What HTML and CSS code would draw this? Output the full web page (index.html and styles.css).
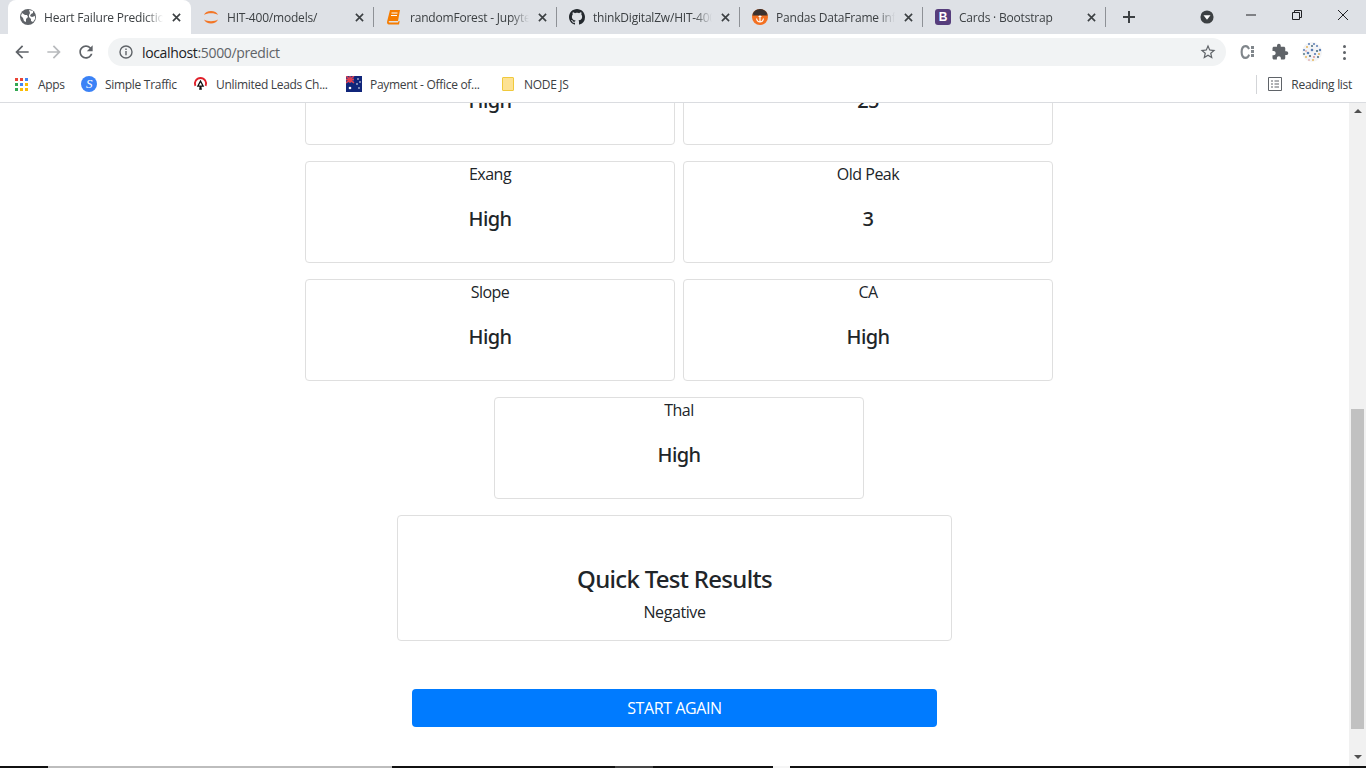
FILE: index.html
```html
<!DOCTYPE html>
<html lang="en">
<head>
    <meta charset="UTF-8">
    <title>Heart Failure Prediction</title>
    <link rel="stylesheet" href="styles.css">
</head>
<body>
    <div class="tabstrip">
        <div class="tab active">
            <svg class="favicon" viewBox="0 0 16 16"><circle cx="8" cy="8" r="8" fill="#5f6368"/><path d="M2 4l3 2 2 0 1 2-2 2 0 3-2-1-1-3-2-2zM9 1l4 1 0 2-2 1-1 2 2 1 3-1 0 3-2 3-2-1 0-2-2-2 0-2 1-2z" fill="#fff"/></svg>
            <span class="tab-title">Heart Failure Prediction</span>
            <span class="tab-close"><svg viewBox="0 0 10 10"><path d="M1 1l8 8M9 1l-8 8" /></svg></span>
        </div>
        <div class="tab">
            <svg class="favicon" viewBox="0 0 16 16"><path d="M1 6C2.500 .5 13.500 .5 15 6 12 3.500 4 3.500 1 6zM1 10.500C3 15.800 13 15.800 15 10.500 12 12.800 4 12.800 1 10.500z" fill="#f37626"/></svg>
            <span class="tab-title">HIT-400/models/</span>
            <span class="tab-close"><svg viewBox="0 0 10 10"><path d="M1 1l8 8M9 1l-8 8" /></svg></span>
        </div>
        <div class="tab">
            <svg class="favicon" viewBox="0 0 16 16"><path d="M4 1h10l-2 11H3.500C2.500 12 2.300 13.500 3.500 13.500H12l.2-1 1.500-.5-.7 3.500H3C1.300 15.500.800 14 1.100 12.500z" fill="#f57c00"/><path d="M5.500 4h6M5 6.500h6" stroke="#fff" stroke-width="1"/></svg>
            <span class="tab-title">randomForest - Jupyter Notebook</span>
            <span class="tab-close"><svg viewBox="0 0 10 10"><path d="M1 1l8 8M9 1l-8 8" /></svg></span>
        </div>
        <div class="tab">
            <svg class="favicon" viewBox="0 0 16 16"><path fill="#24292e" d="M8 0C3.580 0 0 3.580 0 8c0 3.540 2.290 6.530 5.470 7.590.4.070.55-.17.55-.38 0-.19-.01-.82-.01-1.490-2.010.37-2.530-.49-2.690-.94-.09-.23-.48-.94-.82-1.130-.28-.15-.68-.52-.01-.53.63-.01 1.080.58 1.230.82.72 1.210 1.870.87 2.330.66.07-.52.28-.87.51-1.070-1.780-.2-3.640-.89-3.640-3.950 0-.87.31-1.590.82-2.150-.08-.2-.36-1.020.08-2.120 0 0 .67-.21 2.200.82.64-.18 1.320-.27 2-.27.68 0 1.360.09 2 .27 1.530-1.040 2.200-.82 2.200-.82.44 1.100.16 1.920.08 2.120.51.56.82 1.270.82 2.150 0 3.070-1.870 3.750-3.650 3.950.29.25.54.73.54 1.480 0 1.070-.01 1.930-.01 2.200 0 .21.15.46.55.38A8.013 8.013 0 0016 8c0-4.420-3.580-8-8-8z"/></svg>
            <span class="tab-title">thinkDigitalZw/HIT-400</span>
            <span class="tab-close"><svg viewBox="0 0 10 10"><path d="M1 1l8 8M9 1l-8 8" /></svg></span>
        </div>
        <div class="tab">
            <svg class="favicon" viewBox="0 0 16 16"><circle cx="8" cy="8" r="8" fill="#f37021"/><path d="M.4 5.500A8 8 0 0 1 15.600 5.500z" fill="#3b3230"/><path d="M0 6.200L8 1.500l8 4.700-1 .3H1z" fill="#3b3230"/><path d="M8 6.500v6.500M4.500 9.500c.5 2.500 2.300 3.500 3.500 3.500s3-1 3.500-3.500M6.500 7.500h3" stroke="#fff" stroke-width="1.200" fill="none"/></svg>
            <span class="tab-title">Pandas DataFrame info()</span>
            <span class="tab-close"><svg viewBox="0 0 10 10"><path d="M1 1l8 8M9 1l-8 8" /></svg></span>
        </div>
        <div class="tab">
            <span class="favicon bootstrap-icon">B</span>
            <span class="tab-title">Cards · Bootstrap</span>
            <span class="tab-close"><svg viewBox="0 0 10 10"><path d="M1 1l8 8M9 1l-8 8" /></svg></span>
        </div>
        <svg class="new-tab" viewBox="0 0 12 12"><path d="M6 0v12M0 6h12"/></svg>
        <div class="tab-search"><svg viewBox="0 0 16 16"><circle cx="8" cy="8" r="7.500" fill="#3c4043"/><path d="M4 6h8L8 11z" fill="#fff"/></svg></div>
        <div class="window-controls">
            <svg viewBox="0 0 12 12"><path d="M1 6h10"/></svg>
            <svg viewBox="0 0 12 12"><path d="M1.500 3.500h7v7h-7zM3.500 3.500v-2h7v7h-2"/></svg>
            <svg viewBox="0 0 12 12"><path d="M1 1l10 10M11 1L1 11"/></svg>
        </div>
    </div>

    <div class="toolbar">
        <svg class="tool" viewBox="0 0 24 24"><path d="M20 11H7.830l5.590-5.590L12 4l-8 8 8 8 1.410-1.410L7.830 13H20v-2z"/></svg>
        <svg class="tool disabled" viewBox="0 0 24 24"><path d="M4 11h12.170l-5.590-5.590L12 4l8 8-8 8-1.410-1.410L16.170 13H4v-2z"/></svg>
        <svg class="tool" viewBox="0 0 24 24"><path d="M17.650 6.350C16.200 4.900 14.210 4 12 4c-4.420 0-7.990 3.580-7.990 8s3.570 8 7.990 8c3.730 0 6.840-2.550 7.730-6h-2.080c-.82 2.330-3.040 4-5.650 4-3.310 0-6-2.690-6-6s2.690-6 6-6c1.660 0 3.140.69 4.220 1.780L13 11h7V4l-2.350 2.350z"/></svg>
        <div class="omnibox">
            <svg class="info" viewBox="0 0 14 14"><circle cx="7" cy="7" r="6" fill="none" stroke="#5f6368" stroke-width="1.400"/><path d="M6.300 6h1.400v4.200H6.300zM6.300 3.600h1.400V5H6.300z" fill="#5f6368"/></svg>
            <span class="url"><b>localhost</b>:5000/predict</span>
            <svg class="star" viewBox="0 0 24 24"><path d="M22 9.240l-7.190-.62L12 2 9.190 8.630 2 9.240l5.460 4.730L5.820 21 12 17.270 18.180 21l-1.630-7.030L22 9.240zM12 15.400l-3.760 2.270 1-4.280-3.320-2.880 4.380-.38L12 6.100l1.710 4.040 4.380.38-3.320 2.880 1 4.280L12 15.400z"/></svg>
        </div>
        <div class="extensions">
            <span class="ext-c"><span>C</span><i></i></span>
            <svg class="ext" viewBox="0 0 24 24"><path d="M20.500 11H19V7c0-1.100-.9-2-2-2h-4V3.500C13 2.120 11.880 1 10.500 1S8 2.120 8 3.500V5H4c-1.100 0-1.990.9-1.990 2v3.800H3.500c1.490 0 2.700 1.210 2.700 2.700s-1.210 2.700-2.700 2.700H2V20c0 1.100.9 2 2 2h3.800v-1.500c0-1.490 1.210-2.700 2.700-2.700 1.490 0 2.700 1.210 2.700 2.700V22H17c1.100 0 2-.9 2-2v-4h1.500c1.380 0 2.500-1.120 2.500-2.500S21.880 11 20.500 11z"/></svg>
            <svg class="avatar" viewBox="0 0 20 20">
                <circle cx="10" cy="10" r="10" fill="#f3f4f6"/>
                <g fill="#5b7fb5"><circle cx="7" cy="2" r="1"/><circle cx="12" cy="2" r="1"/><circle cx="2" cy="8" r="1"/><circle cx="18" cy="8" r="1.200"/><circle cx="10" cy="8" r="1.300"/><circle cx="6" cy="11" r="1.300"/><circle cx="13" cy="12" r="1.100"/><circle cx="15" cy="4" r="1"/></g>
                <g fill="#e8b04a"><circle cx="5" cy="5" r=".9"/><circle cx="17" cy="12" r=".9"/><circle cx="4" cy="15" r=".9"/><circle cx="11" cy="18" r=".9"/></g>
                <g fill="#4a6d7c"><circle cx="10" cy="4" r="1"/><circle cx="15" cy="9" r="1.100"/><circle cx="8" cy="14" r="1.100"/><circle cx="16" cy="15" r="1"/><circle cx="2" cy="12" r=".9"/></g>
                <g fill="#d88a8a"><circle cx="12" cy="15" r=".9"/><circle cx="7" cy="18" r=".8"/><circle cx="4" cy="9" r=".8"/></g>
            </svg>
            <span class="menu-dots"><i></i><i></i><i></i></span>
        </div>
    </div>

    <div class="bookmarks">
        <div class="bookmark">
            <svg class="apps" viewBox="0 0 13 13">
                <path fill="#ea4335" d="M0 0h3v3H0zM5 0h3v3H5z"/><path fill="#4285f4" d="M10 0h3v3h-3zM5 5h3v3H5z"/><path fill="#34a853" d="M0 5h3v3H0zM0 10h3v3H0z"/><path fill="#fbbc05" d="M10 5h3v3h-3zM5 10h3v3H5zM10 10h3v3h-3z"/>
            </svg>
            <span>Apps</span>
        </div>
        <div class="bookmark">
            <span class="traffic-icon">S</span>
            <span>Simple Traffic</span>
        </div>
        <div class="bookmark">
            <svg class="bm-icon leads" viewBox="0 0 16 16"><path d="M2.500 10A6 6 0 1 1 13.500 10" fill="none" stroke="#e0202a" stroke-width="2"/><path d="M8 3.500l4 7.500H9l.5 3h-3l.5-3H4z" fill="#111"/><path d="M8 6.500l1.700 3H6.300z" fill="#fff"/></svg>
            <span>Unlimited Leads Ch...</span>
        </div>
        <div class="bookmark">
            <svg class="bm-icon" viewBox="0 0 16 16"><rect width="16" height="16" fill="#10257a"/><path d="M0 0h8v7H0z" fill="#2a3a8c"/><path d="M0 0l8 7M8 0L0 7M4 0v7M0 3.500h8" stroke="#e04050" stroke-width="1.400"/><g fill="#fff"><circle cx="12" cy="3" r=".8"/><circle cx="14" cy="6" r=".8"/><circle cx="11" cy="8" r=".8"/><circle cx="13" cy="12" r=".8"/><circle cx="4" cy="12" r="1.300"/></g></svg>
            <span>Payment - Office of...</span>
        </div>
        <div class="bookmark">
            <span class="folder"></span>
            <span>NODE JS</span>
        </div>
        <div class="reading-list">
            <svg class="bm-icon" viewBox="0 0 14 14"><path d="M.5.5h13v13H.5zM3 4h2M6.500 4H11M3 7h2M6.500 7H11M3 10h2M6.500 10H11" fill="none" stroke="#5f6368"/></svg>
            <span>Reading list</span>
        </div>
    </div>

    <div class="viewport">
        <main class="page">
            <div class="cards">
                <div class="card"><p class="card-label">Fbs</p><h4 class="card-value">High</h4></div>
                <div class="card"><p class="card-label">Thalach</p><h4 class="card-value">25</h4></div>
                <div class="card"><p class="card-label">Exang</p><h4 class="card-value">High</h4></div>
                <div class="card"><p class="card-label">Old Peak</p><h4 class="card-value">3</h4></div>
                <div class="card"><p class="card-label">Slope</p><h4 class="card-value">High</h4></div>
                <div class="card"><p class="card-label">CA</p><h4 class="card-value">High</h4></div>
                <div class="card"><p class="card-label">Thal</p><h4 class="card-value">High</h4></div>
            </div>
            <div class="result">
                <h3>Quick Test Results</h3>
                <p>Negative</p>
            </div>
            <button class="btn-restart" type="button">START AGAIN</button>
        </main>
        <div class="scrollbar">
            <span class="arrow up"></span>
            <span class="thumb"></span>
            <span class="arrow down"></span>
        </div>
    </div>

    <div class="taskbar-edge">
        <span class="edge-dark edge-a"></span>
        <span class="edge-light edge-b"></span>
        <span class="edge-dark edge-c"></span>
        <span class="edge-mid edge-d"></span>
        <span class="edge-dark edge-e"></span>
        <span class="edge-white edge-f"></span>
        <span class="edge-dark edge-g"></span>
    </div>
</body>
</html>
```

FILE: styles.css
```css
* {
    box-sizing: border-box;
}
html, body {
    height: 768px;
    overflow: hidden;
}
body {
    margin: 0;
    display: flex;
    flex-direction: column;
    font-family: "Open Sans", "Noto Sans", sans-serif;
    background: #fff;
    color: #212529;
}

/* browser chrome */
.tabstrip {
    height: 34px;
    background: #dee1e6;
    display: flex;
    align-items: center;
    padding-left: 8px;
    flex: none;
}
.tab {
    width: 183px;
    height: 34px;
    padding: 0 7px 0 12px;
    display: flex;
    align-items: center;
    position: relative;
    color: #3c4043;
    font-size: 12px;
    letter-spacing: -0.2px;
}
.tab::after {
    content: "";
    position: absolute;
    right: 0;
    top: 7px;
    height: 20px;
    width: 1px;
    background: #8e9196;
}
.tab.active {
    background: #fff;
    border-radius: 8px 8px 0 0;
}
.tab.active::after {
    display: none;
}
.favicon {
    width: 16px;
    height: 16px;
    flex: none;
    margin-right: 8px;
}
.tab-title {
    flex: 1;
    white-space: nowrap;
    overflow: hidden;
    -webkit-mask-image: linear-gradient(to right, #000 85%, transparent);
    mask-image: linear-gradient(to right, #000 85%, transparent);
}
.tab-close {
    width: 16px;
    height: 16px;
    margin-left: 5px;
    display: flex;
    align-items: center;
    justify-content: center;
    flex: none;
}
.tab-close svg {
    width: 9px;
    height: 9px;
    stroke: #3c4043;
    stroke-width: 1.8;
    fill: none;
}
.bootstrap-icon {
    background: #563d7c;
    color: #fff;
    border-radius: 3px;
    font: bold 12px/16px "Liberation Sans", sans-serif;
    text-align: center;
    letter-spacing: 0;
}
.new-tab {
    width: 12px;
    height: 12px;
    margin-left: 17px;
    stroke: #3c4043;
    stroke-width: 2;
    flex: none;
}
.tab-search {
    margin-left: 65px;
    width: 14px;
    height: 14px;
    display: flex;
}
.window-controls {
    margin-left: 31px;
    display: flex;
    gap: 34px;
    margin-top: -5px;
}
.window-controls svg {
    width: 12px;
    height: 12px;
    fill: none;
    stroke: #202124;
    stroke-width: 1;
}

.toolbar {
    height: 36px;
    display: flex;
    align-items: center;
    padding: 0 0 0 12px;
    flex: none;
    background: #fff;
}
.tool {
    width: 20px;
    height: 20px;
    fill: #5f6368;
    margin-right: 12px;
    flex: none;
}
.tool.disabled {
    fill: #b8babd;
}
.omnibox {
    width: 1118px;
    height: 28px;
    border-radius: 14px;
    background: #f1f3f4;
    display: flex;
    align-items: center;
    padding: 0 9px 0 11px;
    flex: none;
}
.info {
    width: 14px;
    height: 14px;
    flex: none;
}
.url {
    margin-left: 9px;
    font-size: 14px;
    color: #5f6368;
    flex: 1;
    letter-spacing: -0.35px;
}
.url b {
    font-weight: 400;
    color: #202124;
}
.star {
    width: 18px;
    height: 18px;
    fill: #5f6368;
}
.extensions {
    flex: 1;
    display: flex;
    align-items: center;
    padding-left: 14px;
}
.ext-c {
    width: 16px;
    height: 20px;
    position: relative;
    color: #80868b;
    font: bold 20px/20px "Liberation Sans", sans-serif;
}
.ext-c span {
    display: block;
    transform: scaleX(.72);
    transform-origin: left center;
}
.ext-c i {
    position: absolute;
    left: 11px;
    top: 4px;
    width: 3px;
    height: 3px;
    background: #80868b;
    box-shadow: 0 4px 0 #80868b, 0 8px 0 #80868b;
}
.ext {
    width: 18px;
    height: 18px;
    fill: #5f6368;
    margin-left: 15px;
}
.avatar {
    width: 20px;
    height: 20px;
    margin-left: 13px;
}
.menu-dots {
    margin-left: 21px;
    display: flex;
    flex-direction: column;
    gap: 3px;
}
.menu-dots i {
    width: 3px;
    height: 3px;
    border-radius: 50%;
    background: #5f6368;
}

.bookmarks {
    height: 33px;
    display: grid;
    grid-template-columns: 66px 112px 153px 156px 1fr auto;
    align-items: center;
    padding: 0 14px 4px 15px;
    border-bottom: 1px solid #dadce0;
    font-size: 12px;
    color: #3c4043;
    flex: none;
    letter-spacing: -0.3px;
}
.bookmark {
    display: flex;
    align-items: center;
    white-space: nowrap;
}
.apps {
    width: 13px;
    height: 13px;
    margin-right: 10px;
}
.traffic-icon {
    width: 16px;
    height: 16px;
    border-radius: 50%;
    background: #3b82f6;
    color: #fff;
    font: italic 13px/16px "Liberation Serif", serif;
    text-align: center;
    margin-right: 8px;
}
.bm-icon {
    width: 16px;
    height: 16px;
    margin-right: 8px;
    flex: none;
}
.bm-icon.leads {
    width: 15px;
}
.folder {
    width: 12px;
    height: 14px;
    background: #fde293;
    border: 1px solid #f0c93c;
    border-radius: 1px;
    margin-right: 10px;
}
.reading-list {
    display: flex;
    align-items: center;
    border-left: 1px solid #d3d5d8;
    height: 19px;
    padding-left: 11px;
}
.reading-list .bm-icon {
    width: 14px;
    height: 14px;
    margin-right: 9px;
}

/* page content */
.viewport {
    height: 663px;
    display: flex;
    overflow: hidden;
    flex: none;
}
.page {
    flex: 1;
    margin-top: -60px;
    display: flex;
    flex-direction: column;
    align-items: center;
}
.cards {
    width: 756px;
    margin-left: 9px;
    display: flex;
    flex-wrap: wrap;
    justify-content: center;
    gap: 16px 8px;
}
.card {
    width: 370px;
    height: 102px;
    border: 1px solid #dfdfdf;
    border-radius: 4px;
    text-align: center;
}
.card-label {
    margin: 0;
    font-size: 16px;
    line-height: 24px;
    letter-spacing: -0.5px;
}
.card-value {
    margin: 21px 0 0;
    font-family: "Noto Sans", "Open Sans", sans-serif;
    font-size: 20px;
    font-weight: 500;
    line-height: 24px;
    letter-spacing: -0.6px;
}
.result {
    width: 555px;
    height: 126px;
    margin-top: 16px;
    padding-top: 48px;
    border: 1px solid #dfdfdf;
    border-radius: 4px;
    text-align: center;
}
.result h3 {
    margin: 0;
    font-family: "Noto Sans", "Open Sans", sans-serif;
    font-size: 24px;
    font-weight: 500;
    line-height: 29px;
    letter-spacing: -0.7px;
}
.result p {
    margin: 7px 0 0;
    font-size: 16px;
    line-height: 24px;
    letter-spacing: -0.4px;
}
.btn-restart {
    width: 525px;
    height: 38px;
    margin-top: 48px;
    border: 0;
    border-radius: 4px;
    background: #007bff;
    color: #fff;
    font-family: inherit;
    font-size: 16px;
    letter-spacing: -0.4px;
}

.scrollbar {
    width: 17px;
    flex: none;
    background: #f1f1f1;
    display: flex;
    flex-direction: column;
    align-items: center;
}
.arrow {
    width: 0;
    height: 0;
    border-left: 4px solid transparent;
    border-right: 4px solid transparent;
    flex: none;
}
.arrow.up {
    border-bottom: 4px solid #505050;
    margin-top: 6px;
}
.arrow.down {
    border-top: 4px solid #505050;
    margin-top: 26px;
}
.thumb {
    width: 13px;
    height: 320px;
    margin-top: 296px;
    background: #c1c1c1;
    flex: none;
}

/* strip of the taskbar showing under the window */
.taskbar-edge {
    height: 2px;
    display: flex;
    flex: none;
}
.edge-dark {
    background: #111;
}
.edge-light {
    background: #bdbdbd;
}
.edge-mid {
    background: #444;
}
.edge-white {
    background: #f5f5f5;
}
.edge-a { width: 48px; }
.edge-b { width: 344px; }
.edge-c { width: 223px; }
.edge-d { width: 38px; }
.edge-e { width: 120px; }
.edge-f { width: 17px; }
.edge-g { flex: 1; }
```
